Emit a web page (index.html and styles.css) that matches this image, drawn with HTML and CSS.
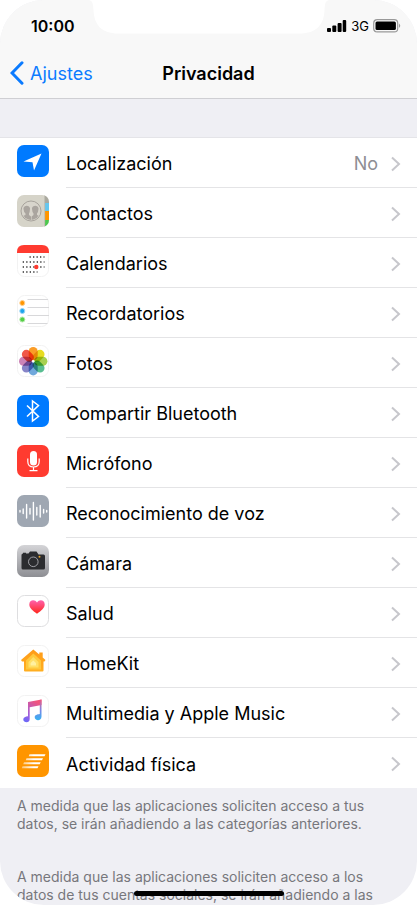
FILE: index.html
```html
<!DOCTYPE html>
<html lang="es">
<head>
<meta charset="utf-8">
<meta name="viewport" content="width=device-width, initial-scale=1">
<title>Privacidad</title>
<link rel="stylesheet" href="styles.css">
</head>
<body>
<div class="phone">
  <svg class="notch" viewBox="0 0 240 34" aria-hidden="true"><path d="M0 0C4 1 4 4 4.500 10C5 25 13 33.500 29 33.500H211C227 33.500 235 25 235.500 10C236 4 236 1 240 0Z" fill="#fff"/></svg>
  <header class="top">
    <div class="status">
      <span class="time">10:00</span>
      <span class="signals">
        <svg width="20" height="12" viewBox="0 0 20 12" aria-hidden="true"><rect x="0" y="8" width="4" height="4" rx="1"/><rect x="5.300" y="5.500" width="4" height="6.500" rx="1"/><rect x="10.600" y="3" width="4" height="9" rx="1"/><rect x="15.700" y="0" width="3.500" height="12" rx="1"/></svg>
        <span class="network">3G</span>
        <svg width="28" height="14" viewBox="0 0 28 14" aria-hidden="true"><rect x=".7" y=".7" width="24" height="12.200" rx="3.500" fill="none" stroke="#999" stroke-width="1.200"/><rect x="2.500" y="2.500" width="20.400" height="8.600" rx="1.500"/><path d="M26 4.500Q28.500 6.800 26 9Z" fill="#999"/></svg>
      </span>
    </div>
    <nav class="nav">
      <a class="back" href="#"><svg width="14" height="24" viewBox="0 0 14 24" aria-hidden="true"><path d="M12 1.800L2 12L12 22.200" fill="none" stroke="#0b7bff" stroke-width="3" stroke-linecap="round"/></svg><span>Ajustes</span></a>
      <h1>Privacidad</h1>
    </nav>
  </header>
  <main>
    <ul class="list">
      <li><a class="row" href="#">
        <svg class="icon" viewBox="0 0 32 32" aria-hidden="true"><rect width="32" height="32" rx="7" fill="#007aff"/><path d="M24.500 8.500L17 25.500L15.500 17.200L6.500 16.500Z" fill="#fff"/></svg>
        <span class="label"><span>Localización</span><span class="value">No</span><svg class="chevron" viewBox="0 0 10 16"><path d="M1 1.500L8 8L1 14.500"/></svg></span></a></li>
      <li><a class="row" href="#">
        <svg class="icon" viewBox="0 0 32 32" aria-hidden="true"><defs><clipPath id="tile"><rect width="32" height="32" rx="7"/></clipPath><clipPath id="medal"><circle cx="14" cy="16" r="9"/></clipPath></defs><g clip-path="url(#tile)"><rect width="32" height="32" fill="#d6d4c9"/><path d="M28 0H32V8H28Z" fill="#aaa99f"/><path d="M28 8H32V16H28Z" fill="#65c7ef"/><path d="M28 16H32V25H28Z" fill="#ff9500"/><path d="M28 25H32V32H28Z" fill="#4cc84d"/><path d="M27.700 0V32" stroke="#b5b3aa" stroke-width=".8"/></g><circle cx="14" cy="16" r="10" fill="#d8d5cc" stroke="#a39e97" stroke-width=".9"/><g clip-path="url(#medal)" fill="#aaa59f"><path d="M6.500 14C6 9.500 13.500 9.500 13 14Q12.800 17.500 12 18.500V20L14 21.500V26H3V22L8.500 20V18.500Q6.700 17 6.500 14Z"/><path d="M15 14C14.500 9.500 22 9.500 21.500 14Q21.300 17 20 18.500V20L25 22V26H14.600V21.500L16.500 20V18.500Q15.200 17 15 14Z"/></g></svg>
        <span class="label"><span>Contactos</span><svg class="chevron" viewBox="0 0 10 16"><path d="M1 1.500L8 8L1 14.500"/></svg></span></a></li>
      <li><a class="row" href="#">
        <svg class="icon" viewBox="0 0 32 32" aria-hidden="true"><rect x=".5" y=".5" width="31" height="31" rx="7" fill="#fff" stroke="#f2f2f2"/><path d="M0 8V7Q0 0 7 0H25Q32 0 32 7V8Z" fill="#ff3b30"/><g stroke="#333" stroke-width="1.500" stroke-dasharray="1.300 2.200"><path d="M12.500 12H27.500M5.700 17H27.500M5.700 22H27.500M5.700 27H20.500"/></g><circle cx="19.300" cy="22" r="2.200" fill="#ff3b30"/></svg>
        <span class="label"><span>Calendarios</span><svg class="chevron" viewBox="0 0 10 16"><path d="M1 1.500L8 8L1 14.500"/></svg></span></a></li>
      <li><a class="row" href="#">
        <svg class="icon" viewBox="0 0 32 32" aria-hidden="true"><rect x=".5" y=".5" width="31" height="31" rx="7" fill="#fff" stroke="#f2f2f2"/><path d="M10.500 4.500H31M10.500 12.500H32M10.500 20.500H32M10.500 28.500H30.500" stroke="#d8d8da" stroke-width="1"/><g stroke-width="1"><circle cx="5.300" cy="8" r="2.500" fill="#ff9500" stroke="#ffd08c"/><circle cx="5.300" cy="16" r="2.500" fill="#1ea5ec" stroke="#99d5f5"/><circle cx="5.300" cy="24.500" r="2.500" fill="#55cf46" stroke="#b2e9a9"/></g></svg>
        <span class="label"><span>Recordatorios</span><svg class="chevron" viewBox="0 0 10 16"><path d="M1 1.500L8 8L1 14.500"/></svg></span></a></li>
      <li><a class="row" href="#">
        <svg class="icon photos" viewBox="0 0 32 32" aria-hidden="true"><rect x=".5" y=".5" width="31" height="31" rx="7" fill="#fff" stroke="#f2f2f2"/><rect class="petal" x="11.700" y="2" width="9" height="13.200" rx="4.500" fill="#fb9d27"/><rect class="petal" x="11.700" y="2" width="9" height="13.200" rx="4.500" fill="#e8dc20" transform="rotate(45 16.200 16.200)"/><rect class="petal" x="11.700" y="2" width="9" height="13.200" rx="4.500" fill="#a7d050" transform="rotate(90 16.200 16.200)"/><rect class="petal" x="11.700" y="2" width="9" height="13.200" rx="4.500" fill="#58bd91" transform="rotate(135 16.200 16.200)"/><rect class="petal" x="11.700" y="2" width="9" height="13.200" rx="4.500" fill="#70a8dc" transform="rotate(180 16.200 16.200)"/><rect class="petal" x="11.700" y="2" width="9" height="13.200" rx="4.500" fill="#8785c8" transform="rotate(225 16.200 16.200)"/><rect class="petal" x="11.700" y="2" width="9" height="13.200" rx="4.500" fill="#cc83b7" transform="rotate(270 16.200 16.200)"/><rect class="petal" x="11.700" y="2" width="9" height="13.200" rx="4.500" fill="#f05849" transform="rotate(315 16.200 16.200)"/><circle cx="16.200" cy="16.200" r="1.300" fill="#fff" opacity=".8"/></svg>
        <span class="label"><span>Fotos</span><svg class="chevron" viewBox="0 0 10 16"><path d="M1 1.500L8 8L1 14.500"/></svg></span></a></li>
      <li><a class="row" href="#">
        <svg class="icon" viewBox="0 0 32 32" aria-hidden="true"><rect width="32" height="32" rx="7" fill="#007aff"/><path d="M10 10.500L21.500 21.500L15.500 26V6L21.500 10.500L10 21.500" fill="none" stroke="#fff" stroke-width="1.500"/></svg>
        <span class="label"><span>Compartir Bluetooth</span><svg class="chevron" viewBox="0 0 10 16"><path d="M1 1.500L8 8L1 14.500"/></svg></span></a></li>
      <li><a class="row" href="#">
        <svg class="icon" viewBox="0 0 32 32" aria-hidden="true"><rect width="32" height="32" rx="7" fill="#ff3b30"/><rect x="13" y="6" width="7" height="14.500" rx="3.500" fill="#fff"/><path d="M10.800 13.500V16.500Q10.800 22 16.500 22T22.200 16.500V13.500M16.500 22V25.500M12.500 25.700H20.500" fill="none" stroke="#fff" stroke-width="1.200"/></svg>
        <span class="label"><span>Micrófono</span><svg class="chevron" viewBox="0 0 10 16"><path d="M1 1.500L8 8L1 14.500"/></svg></span></a></li>
      <li><a class="row" href="#">
        <svg class="icon" viewBox="0 0 32 32" aria-hidden="true"><rect width="32" height="32" rx="7" fill="#9fa7b2"/><path d="M3 15.500V17M6.200 14V18.500M9.600 9.500V23M13 13.500V19M16.400 7.500V25M19.800 12.500V20M23.200 10.500V22M26.600 14.500V18M29.700 15.500V17" stroke="#fff" stroke-width="1.400" stroke-linecap="round"/></svg>
        <span class="label"><span>Reconocimiento de voz</span><svg class="chevron" viewBox="0 0 10 16"><path d="M1 1.500L8 8L1 14.500"/></svg></span></a></li>
      <li><a class="row" href="#">
        <svg class="icon" viewBox="0 0 32 32" aria-hidden="true"><defs><linearGradient id="steel" x2="0" y2="1"><stop stop-color="#d4d4d7"/><stop offset="1" stop-color="#8d8e93"/></linearGradient></defs><rect width="32" height="32" rx="7" fill="url(#steel)"/><path d="M6 8.500V7.800H9V8.500H11.500L13 6.500H19.500L21.500 9.500H26.500Q28 9.500 28 11V23Q28 24.500 26.500 24.500H6Q4.500 24.500 4.500 23V10Q4.500 8.500 6 8.500Z" fill="#2b2c2f"/><circle cx="16.300" cy="16.800" r="4.800" fill="none" stroke="#aaaab0" stroke-width=".9"/><circle cx="22.500" cy="11.800" r="1" fill="#e8a52a"/></svg>
        <span class="label"><span>Cámara</span><svg class="chevron" viewBox="0 0 10 16"><path d="M1 1.500L8 8L1 14.500"/></svg></span></a></li>
      <li><a class="row" href="#">
        <svg class="icon" viewBox="0 0 32 32" aria-hidden="true"><defs><linearGradient id="heart" x2="0" y2="1"><stop stop-color="#ff61ad"/><stop offset="1" stop-color="#ff2618"/></linearGradient></defs><rect x=".5" y=".5" width="31" height="31" rx="7" fill="#fff" stroke="#dedee0"/><path d="M20 18.800C15.500 15.500 12.300 13 12.300 9.500C12.300 4.800 17.800 4 20 7.500C22.200 4 27.700 4.800 27.700 9.500C27.700 13 24.500 15.500 20 18.800Z" fill="url(#heart)"/></svg>
        <span class="label"><span>Salud</span><svg class="chevron" viewBox="0 0 10 16"><path d="M1 1.500L8 8L1 14.500"/></svg></span></a></li>
      <li><a class="row" href="#">
        <svg class="icon" viewBox="0 0 32 32" aria-hidden="true"><defs><linearGradient id="house" x2="0" y2="1"><stop stop-color="#ff9a18"/><stop offset="1" stop-color="#ffaf21"/></linearGradient></defs><rect x=".5" y=".5" width="31" height="31" rx="7" fill="#fff" stroke="#f2f2f2"/><path d="M16.300 4.500L22.300 9.500V7.500H25.700V12.500L28.500 15L27.500 16.500H26.500V25.500Q26.500 26.500 25.500 26.500H8Q7 26.500 7 25.500V16.500H5L4 15Z" fill="url(#house)"/><path d="M16.300 8.500L24 15.500V24.500H9V15.500Z" fill="#ffc83d"/><path d="M16.300 12L21.500 17V22.500H11.500V17Z" fill="#ffdf67"/><path d="M16.300 15.500L19 18V20.500H13.600V18Z" fill="#fff0a0"/></svg>
        <span class="label"><span>HomeKit</span><svg class="chevron" viewBox="0 0 10 16"><path d="M1 1.500L8 8L1 14.500"/></svg></span></a></li>
      <li><a class="row" href="#">
        <svg class="icon" viewBox="0 0 32 32" aria-hidden="true"><defs><linearGradient id="note" x1="0" y1="1" x2=".6" y2="0"><stop stop-color="#5e6bff"/><stop offset=".35" stop-color="#9b5fe0"/><stop offset="1" stop-color="#f2557d"/></linearGradient><linearGradient id="stem" x2="0" y2="1"><stop stop-color="#f2557d"/><stop offset=".5" stop-color="#7c87e5"/><stop offset="1" stop-color="#35b2f3"/></linearGradient></defs><rect x=".5" y=".5" width="31" height="31" rx="7" fill="#fff" stroke="#f2f2f2"/><path d="M11 7L24.500 4.500V10L12.700 12.300V24C12.700 28.800 6.300 27.800 6.300 24.500C6.300 22.300 8.500 21.700 11 21.300Z" fill="url(#note)"/><path d="M22.800 5L24.500 4.500V21.500C24.500 26.500 17.700 26 17.700 22.300C17.700 20 20.300 19.400 22.800 19Z" fill="url(#stem)"/></svg>
        <span class="label"><span>Multimedia y Apple Music</span><svg class="chevron" viewBox="0 0 10 16"><path d="M1 1.500L8 8L1 14.500"/></svg></span></a></li>
      <li><a class="row" href="#">
        <svg class="icon" viewBox="0 0 32 32" aria-hidden="true"><defs><linearGradient id="trail"><stop stop-color="#fff" stop-opacity=".45"/><stop offset=".5" stop-color="#fff"/></linearGradient></defs><rect width="32" height="32" rx="7" fill="#ff9500"/><path d="M12.500 9.300H28.500L27.500 11.300H11.700ZM9.500 13.300H26L25 15.300H8.700ZM7 17.300H23.700L22.700 19.300H6.200ZM5.500 21.300H21.500L20.500 23.300H4.800Z" fill="url(#trail)"/></svg>
        <span class="label"><span>Actividad física</span><svg class="chevron" viewBox="0 0 10 16"><path d="M1 1.500L8 8L1 14.500"/></svg></span></a></li>
    </ul>
    <p class="note">A medida que las aplicaciones soliciten acceso a tus datos, se irán añadiendo a las categorías anteriores.</p>
    <p class="note">A medida que las aplicaciones soliciten acceso a los datos de tus cuentas sociales, se irán añadiendo a las</p>
  </main>
  <div class="home-bar"></div>
</div>
</body>
</html>
```
FILE: styles.css
```css
* {
  box-sizing: border-box;
}

body {
  margin: 0;
  background: #fff;
  color: #000;
  font-family: Inter, "Liberation Sans", sans-serif;
}

a {
  color: inherit;
  text-decoration: none;
}

.phone {
  position: relative;
  min-height: 100vh;
  overflow: hidden;
  border-radius: 44px;
  background: #efeff4;
}

.notch {
  position: absolute;
  top: 0;
  left: 50%;
  width: 240px;
  height: 34px;
  transform: translateX(-50%);
}

.top {
  border-bottom: 1px solid #cfcfd3;
  background: #f8f8f8;
}

.status {
  display: flex;
  align-items: center;
  justify-content: space-between;
  height: 50px;
  padding: 2px 16px 0 31px;
}

.time {
  font-size: 16px;
  font-weight: 600;
}

.signals {
  display: flex;
  align-items: center;
  gap: 4px;
}

.network {
  font-size: 13px;
}

.nav {
  display: grid;
  grid-template-columns: 1fr auto 1fr;
  align-items: center;
  height: 48px;
  padding: 0 10px 2px;
}

.back {
  display: flex;
  align-items: center;
  gap: 6px;
  color: #0b7bff;
  font-size: 18px;
}

h1 {
  margin: 0;
  font-size: 18px;
  font-weight: 600;
}

.list {
  margin: 38px 0 9px;
  padding: 0;
  border-top: 1px solid #e4e4e8;
  background: #fff;
  list-style: none;
}

.row {
  display: flex;
  gap: 17px;
  height: 50px;
  padding-left: 17px;
}

.icon {
  flex: none;
  width: 32px;
  height: 32px;
  margin-top: 7px;
}

.petal {
  mix-blend-mode: multiply;
}

.photos {
  isolation: isolate;
}

.label {
  display: flex;
  flex: 1;
  align-items: center;
  justify-content: space-between;
  padding: 2px 16px 0 0;
  border-bottom: 1px solid #e4e4e6;
  font-size: 18px;
}

li:last-child .label {
  border-bottom: 0;
}

.value {
  margin-left: auto;
  margin-right: 13px;
  color: #8e8e93;
}

.chevron {
  width: 10px;
  height: 16px;
  fill: none;
  stroke: #c7c7cc;
  stroke-width: 2;
}

.note {
  margin: 0;
  padding: 0 17px;
  color: #77777c;
  font-size: 14px;
  line-height: 18px;
}

.note + .note {
  margin-top: 35px;
}

.home-bar {
  position: absolute;
  bottom: 9px;
  left: 50%;
  width: 150px;
  height: 5px;
  border-radius: 3px;
  background: #000;
  transform: translateX(-50%);
}
```
